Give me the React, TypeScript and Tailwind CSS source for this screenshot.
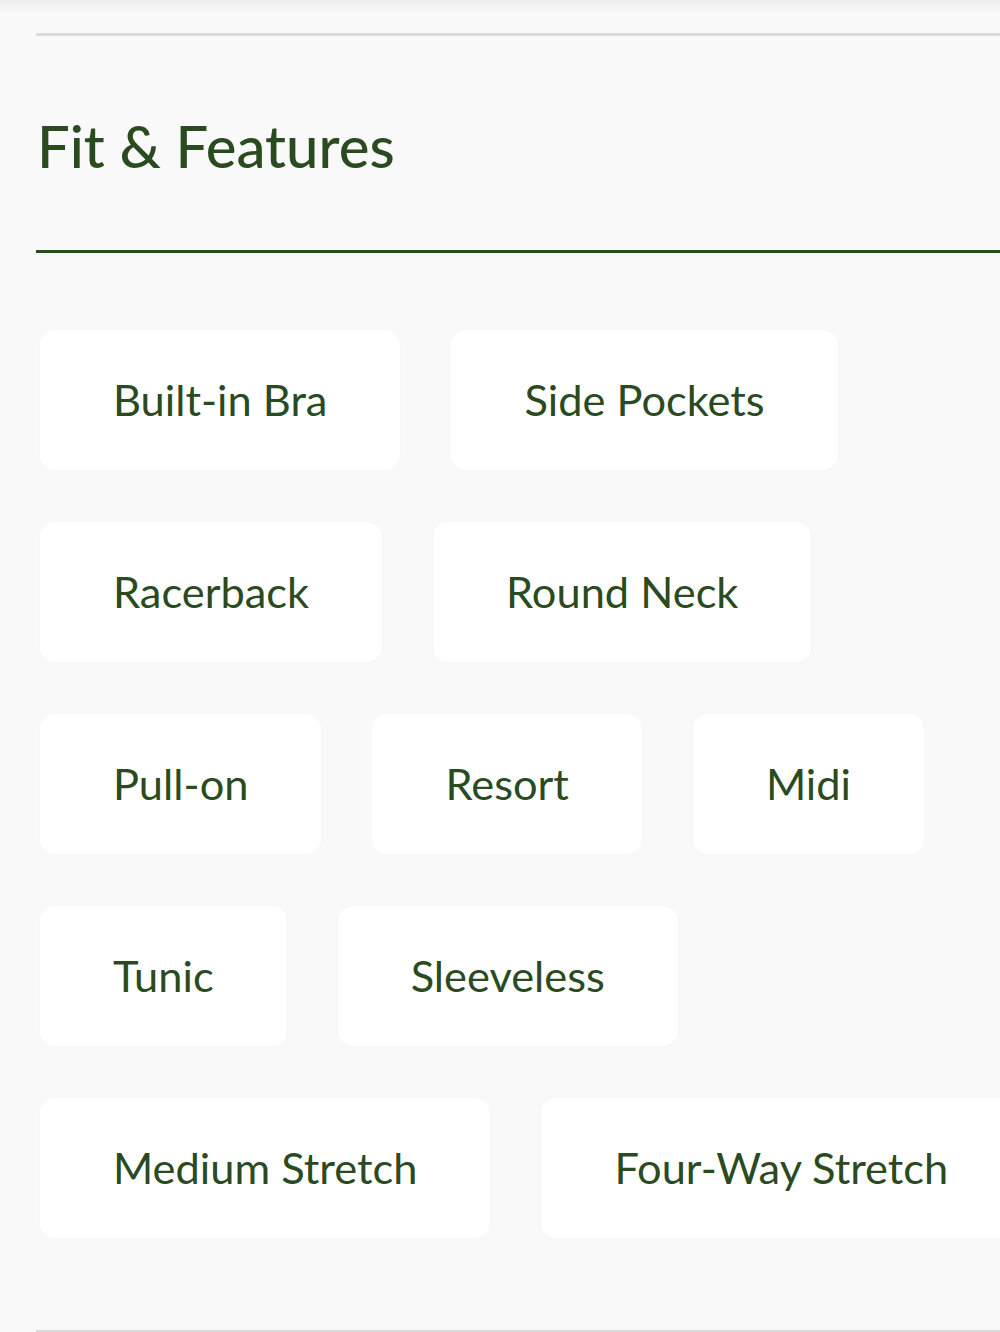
import React from "react";

const rows: string[][] = [
  ["Built-in Bra", "Side Pockets"],
  ["Racerback", "Round Neck"],
  ["Pull-on", "Resort", "Midi"],
  ["Tunic", "Sleeveless"],
  ["Medium Stretch", "Four-Way Stretch"],
];

const features = rows.flat();

function Chip({ label }: { label: string }) {
  return (
    <div className="h-[140px] flex items-center justify-center px-[73px] bg-white rounded-[14px] shadow-[0_0_2px_rgba(0,0,0,0.06)] whitespace-nowrap">
      <span className="text-[43.4px] leading-none text-[#2a4a1f]">{label}</span>
    </div>
  );
}

export default function App() {
  return (
    <div
      className="w-[1000px] h-[1332px] overflow-hidden bg-[#f9f9f9] relative"
      style={{ fontFamily: "Lato, 'Open Sans', sans-serif" }}
    >
      <div className="absolute top-0 left-0 right-0 h-[14px] bg-gradient-to-b from-[#eeeeee] to-transparent" />
      <div className="w-[1080px] pl-[36px] pt-[33px]">
        <div className="h-[3px] bg-[#dadada]" />
        <h2 className="mt-[75px] ml-[1px] text-[58px] leading-[70px] text-[#2a4a1f] font-medium">
          Fit &amp; Features
        </h2>
        <div className="mt-[69px] h-[3px] bg-[#2a4a1f]" />
        <div className="mt-[77px] pl-[4px] flex flex-wrap gap-x-[51px] gap-y-[52px]">
          {features.map((f) => (
            <Chip key={f} label={f} />
          ))}
        </div>
        <div className="mt-[92px] h-[3px] bg-[#dadada]" />
      </div>
    </div>
  );
}
